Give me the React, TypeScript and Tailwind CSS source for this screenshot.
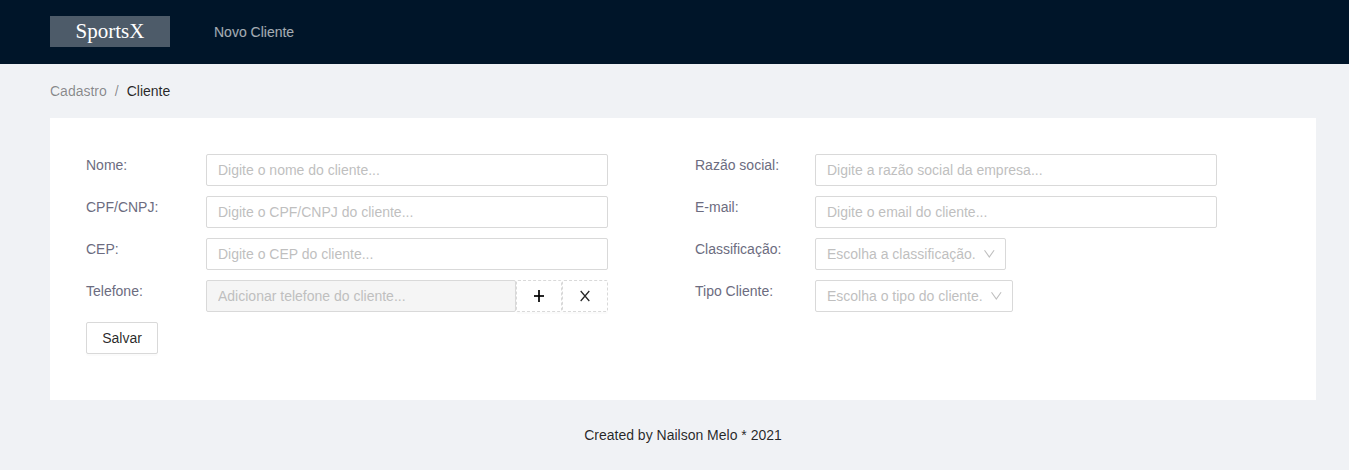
import type { ReactNode } from 'react';

function PlusIcon() {
  return (
    <svg width="14" height="14" viewBox="0 0 14 14" fill="currentColor" shapeRendering="crispEdges">
      <path d="M6 1h2v12H6z" />
      <path d="M2 6h10v2H2z" />
    </svg>
  );
}

function CloseIcon() {
  return (
    <svg width="14" height="14" viewBox="0 0 14 14" fill="none" stroke="currentColor" strokeWidth="1.25">
      <path d="M2.7 2l8.6 10M11.3 2L2.7 12" />
    </svg>
  );
}

function DownIcon() {
  return (
    <svg width="12" height="12" viewBox="0 0 12 12" fill="none" stroke="currentColor" strokeWidth="1.1">
      <path d="M1.5 2.2L6.3 9l4.8-6.8" />
    </svg>
  );
}

function Row({ label, children }: { label: string; children: ReactNode }) {
  return (
    <div className="flex h-8">
      <label className="w-[120px] shrink-0 text-[#6c6c80]">{label}</label>
      {children}
    </div>
  );
}

function TextInput({ placeholder }: { placeholder: string }) {
  return (
    <input
      className="h-8 w-[402px] rounded-[2px] border border-[#d9d9d9] bg-white px-[11px] py-1 outline-none placeholder:text-[#bfbfbf]"
      placeholder={placeholder}
    />
  );
}

function Select({ placeholder, width }: { placeholder: string; width: string }) {
  return (
    <button
      type="button"
      className={`flex h-8 items-center justify-between rounded-[2px] border border-[#d9d9d9] bg-white pr-2.5 pl-[11px] text-[#bfbfbf] ${width}`}
    >
      <span className="whitespace-nowrap">{placeholder}</span>
      <DownIcon />
    </button>
  );
}

function DashedButton({ label, children }: { label: string; children: ReactNode }) {
  return (
    <button
      type="button"
      aria-label={label}
      className="flex h-8 w-[46px] items-center justify-center rounded-[2px] border border-dashed border-[#d9d9d9] bg-white shadow-[0_2px_0_rgba(0,0,0,0.015)]"
    >
      {children}
    </button>
  );
}

export default function App() {
  return (
    <div className="min-h-[470px] bg-[#f0f2f5] font-['Liberation_Sans',Arial,sans-serif] text-sm leading-[22px] text-black/85">
      <header className="flex h-16 items-start bg-[#001529] pt-4 pl-[50px]">
        <div className="h-[31px] w-[120px] bg-[#4d5b69] text-center font-['Liberation_Serif',serif] text-[21px] leading-[31px] text-white">
          SportsX
        </div>
        <a className="ml-11 leading-8 text-white/65">Novo Cliente</a>
      </header>
      <main className="pr-[33px] pl-[50px]">
        <nav className="flex h-[54px] items-center">
          <span className="text-black/45">Cadastro</span>
          <span className="mx-2 text-black/45">/</span>
          <span>Cliente</span>
        </nav>
        <section className="h-[282px] bg-white px-9 pt-9">
          <div className="flex">
            <div className="flex w-[609px] flex-col gap-2.5">
              <Row label="Nome:">
                <TextInput placeholder="Digite o nome do cliente..." />
              </Row>
              <Row label="CPF/CNPJ:">
                <TextInput placeholder="Digite o CPF/CNPJ do cliente..." />
              </Row>
              <Row label="CEP:">
                <TextInput placeholder="Digite o CEP do cliente..." />
              </Row>
              <Row label="Telefone:">
                <input
                  disabled
                  className="h-8 w-[310px] rounded-[2px] border border-[#d9d9d9] bg-[#f5f5f5] px-[11px] py-1 placeholder:text-[#bfbfbf]"
                  placeholder="Adicionar telefone do cliente..."
                />
                <DashedButton label="Adicionar">
                  <PlusIcon />
                </DashedButton>
                <DashedButton label="Remover">
                  <CloseIcon />
                </DashedButton>
              </Row>
              <button
                type="button"
                className="h-8 w-[72px] rounded-[2px] border border-[#d9d9d9] bg-white shadow-[0_2px_0_rgba(0,0,0,0.015)]"
              >
                Salvar
              </button>
            </div>
            <div className="flex flex-col gap-2.5">
              <Row label="Razão social:">
                <TextInput placeholder="Digite a razão social da empresa..." />
              </Row>
              <Row label="E-mail:">
                <TextInput placeholder="Digite o email do cliente..." />
              </Row>
              <Row label="Classificação:">
                <Select placeholder="Escolha a classificação." width="w-[191px]" />
              </Row>
              <Row label="Tipo Cliente:">
                <Select placeholder="Escolha o tipo do cliente." width="w-[198px]" />
              </Row>
            </div>
          </div>
        </section>
        <footer className="pt-6 pb-6 text-center">Created by Nailson Melo * 2021</footer>
      </main>
    </div>
  );
}
